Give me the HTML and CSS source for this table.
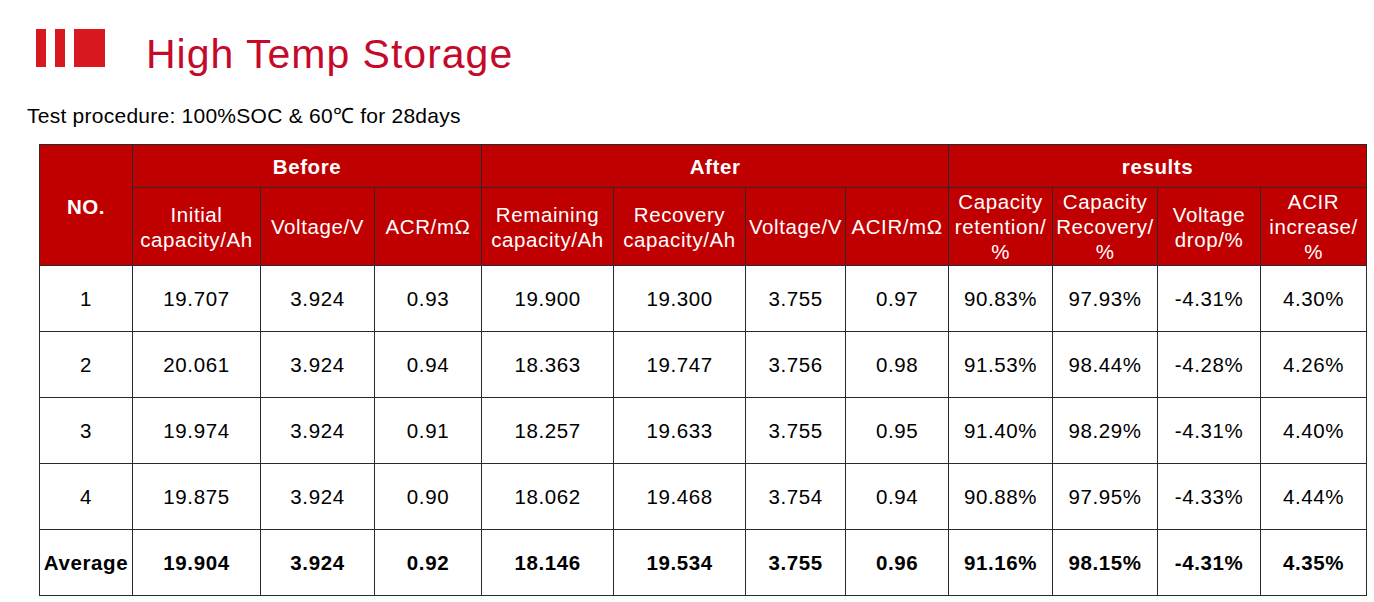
FILE: index.html
```html
<!DOCTYPE html>
<html>
<head>
<meta charset="utf-8">
<link rel="stylesheet" href="styles.css">
</head>
<body>
<div class="page">
  <header class="head">
    <div class="logo">
      <span class="bar"></span><span class="bar"></span><span class="sq"></span>
    </div>
    <h1 class="title">High Temp Storage</h1>
  </header>
  <p class="proc">Test procedure: 100%SOC &amp; 60℃ for 28days</p>
  <table class="data">
    <colgroup>
      <col class="c93"><col class="c128"><col class="c114"><col class="c107"><col class="c132"><col class="c132"><col class="c100"><col class="c103"><col class="c104"><col class="c105"><col class="c103"><col class="c106">
    </colgroup>
    <thead>
      <tr class="h1">
        <th rowspan="2" class="no">NO.</th>
        <th colspan="3" class="grp">Before</th>
        <th colspan="4" class="grp">After</th>
        <th colspan="4" class="grp">results</th>
      </tr>
      <tr class="h2">
        <th>Initial<br>capacity/Ah</th>
        <th>Voltage/V</th>
        <th>ACR/mΩ</th>
        <th>Remaining<br>capacity/Ah</th>
        <th>Recovery<br>capacity/Ah</th>
        <th>Voltage/V</th>
        <th>ACIR/mΩ</th>
        <th>Capacity<br>retention/<br>%</th>
        <th>Capacity<br>Recovery/<br>%</th>
        <th>Voltage<br>drop/%</th>
        <th>ACIR<br>increase/<br>%</th>
      </tr>
    </thead>
    <tbody>
      <tr><td>1</td><td>19.707</td><td>3.924</td><td>0.93</td><td>19.900</td><td>19.300</td><td>3.755</td><td>0.97</td><td>90.83%</td><td>97.93%</td><td>-4.31%</td><td>4.30%</td></tr>
      <tr><td>2</td><td>20.061</td><td>3.924</td><td>0.94</td><td>18.363</td><td>19.747</td><td>3.756</td><td>0.98</td><td>91.53%</td><td>98.44%</td><td>-4.28%</td><td>4.26%</td></tr>
      <tr><td>3</td><td>19.974</td><td>3.924</td><td>0.91</td><td>18.257</td><td>19.633</td><td>3.755</td><td>0.95</td><td>91.40%</td><td>98.29%</td><td>-4.31%</td><td>4.40%</td></tr>
      <tr><td>4</td><td>19.875</td><td>3.924</td><td>0.90</td><td>18.062</td><td>19.468</td><td>3.754</td><td>0.94</td><td>90.88%</td><td>97.95%</td><td>-4.33%</td><td>4.44%</td></tr>
      <tr class="avg"><td>Average</td><td>19.904</td><td>3.924</td><td>0.92</td><td>18.146</td><td>19.534</td><td>3.755</td><td>0.96</td><td>91.16%</td><td>98.15%</td><td>-4.31%</td><td>4.35%</td></tr>
    </tbody>
  </table>
</div>
</body>
</html>
```

FILE: styles.css
```css
* { box-sizing: border-box; }
html, body { margin: 0; padding: 0; background: #fff; }
body { font-family: "Liberation Sans", Arial, sans-serif; color: #000; }
.page { padding: 29px 0 0 0; }
.head { display: flex; align-items: center; height: 38px; padding-left: 36px; }
.logo { display: flex; align-items: stretch; height: 38px; gap: 9px; }
.logo .bar { width: 10px; background: #d7191f; }
.logo .sq { width: 31px; background: #d7191f; }
.title {
  margin: 0 0 0 41px;
  font-weight: normal;
  font-size: 41px;
  letter-spacing: 1px;
  line-height: 38px;
  color: #c4092a;
  padding-top: 11px;
}
.proc {
  margin: 37px 0 0 27px;
  font-size: 21px;
  letter-spacing: 0.25px;
  line-height: 24px;
}
.data {
  margin: 16px 0 0 39px;
  border-collapse: collapse;
  table-layout: fixed;
  width: 1327px;
  font-size: 20.5px;
  letter-spacing: 0.6px;
}
.c93 { width: 93px; } .c128 { width: 128px; } .c114 { width: 114px; } .c107 { width: 107px; }
.c132 { width: 132px; } .c100 { width: 100px; } .c103 { width: 103px; } .c104 { width: 104px; }
.c105 { width: 105px; } .c106 { width: 106px; }
.data th, .data td {
  border: 1px solid #2a2a2a;
  text-align: center;
  padding: 0;
  line-height: 25px;
}
.data th { background: #c00000; color: #fff; font-weight: normal; }
.data th.grp, .data th.no { font-weight: bold; }
.data th.no { vertical-align: middle; padding-top: 2px; }
.h1 { height: 43px; }
.h2 { height: 78px; }
.data tbody tr { height: 66px; }
.data td { color: #000; }
.avg td { font-weight: bold; }
```
